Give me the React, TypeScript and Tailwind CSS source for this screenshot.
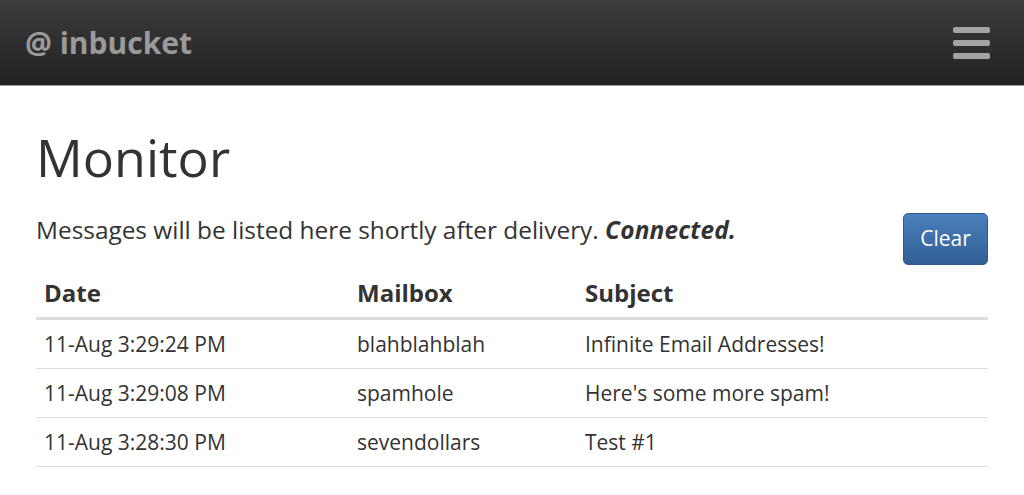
const messages = [
  { date: '11-Aug 3:29:24 PM', mailbox: 'blahblahblah', subject: 'Infinite Email Addresses!' },
  { date: '11-Aug 3:29:08 PM', mailbox: 'spamhole', subject: "Here's some more spam!" },
  { date: '11-Aug 3:28:30 PM', mailbox: 'sevendollars', subject: 'Test #1' },
]

function NavBar() {
  return (
    <div className="h-[86px] flex items-center justify-between pl-[25px] pr-[34px] bg-gradient-to-b from-[#3c3c3c] to-[#222222] border-b border-[#9a9a9a]">
      <span className="text-[30px] font-bold text-[#9a9a9a] leading-none">@ inbucket</span>
      <button className="flex flex-col gap-[7px]">
        <span className="block w-[37px] h-[6px] rounded-[2px] bg-[#a3a3a3]" />
        <span className="block w-[37px] h-[6px] rounded-[2px] bg-[#a3a3a3]" />
        <span className="block w-[37px] h-[6px] rounded-[2px] bg-[#a3a3a3]" />
      </button>
    </div>
  )
}

export default function App() {
  return (
    <div className="min-h-[495px] bg-white text-[#333333] font-['Open_Sans',sans-serif]">
      <NavBar />
      <div className="px-[36px]">
        <h1 className="mt-[41px] text-[52px] leading-[59px] font-normal">Monitor</h1>
        <div className="mt-[27px] mb-1 flex items-start justify-between">
          <p className="mt-[2px] text-[24.4px] leading-[30px]">
            Messages will be listed here shortly after delivery. <b><i className="tracking-[0.2px]">Connected.</i></b>
          </p>
          <button className="w-[85px] h-[52px] rounded-[5px] border border-[#2d5a8c] bg-gradient-to-b from-[#4a80bd] to-[#305f95] text-white text-[21px]">
            Clear
          </button>
        </div>
        <table className="w-full border-collapse table-fixed">
          <thead>
            <tr className="border-b-[3px] border-[#dddddd]">
              <th className="w-[313px] px-2 py-3 text-left text-[24px] leading-[24px] font-bold">Date</th>
              <th className="w-[228px] px-2 py-3 text-left text-[24px] leading-[24px] font-bold">Mailbox</th>
              <th className="px-2 py-3 text-left text-[24px] leading-[24px] font-bold">Subject</th>
            </tr>
          </thead>
          <tbody>
            {messages.map((m) => (
              <tr key={m.date} className="border-b border-[#dddddd]">
                <td className="px-2 py-3 text-[21px] leading-[24px]">{m.date}</td>
                <td className="px-2 py-3 text-[21px] leading-[24px]">{m.mailbox}</td>
                <td className="px-2 py-3 text-[21px] leading-[24px]">{m.subject}</td>
              </tr>
            ))}
          </tbody>
        </table>
      </div>
    </div>
  )
}
